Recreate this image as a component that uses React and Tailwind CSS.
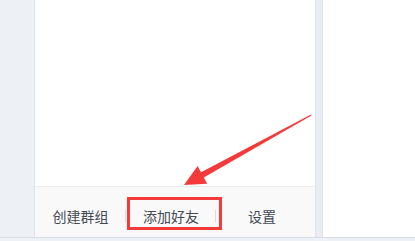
export default function App() {
  const font = { fontFamily: '"Noto Sans CJK SC", "Microsoft YaHei", sans-serif' };
  return (
    <div className="relative w-[415px] h-[241px] overflow-hidden bg-[#eef1f5] flex flex-col" style={font}>
      <div className="flex h-[238px] border-b border-[#d6dde7]">
        {/* side rail */}
        <div className="w-[35px] bg-[#edf0f5] border-r border-[#dbe2ea]" />
        {/* list panel */}
        <div className="w-[280px] flex flex-col bg-white">
          <div className="flex-1" />
          <div className="h-[51px] bg-[#f9f9f9] border-t border-[#ececec] flex items-center pt-[8px] text-[14px] text-[#434a53]">
            <div className="w-[91px] flex justify-center items-center relative">
              <span>创建群组</span>
              <span className="absolute right-0 top-1/2 -translate-y-1/2 w-px h-[13px] bg-[#dcdcdc]" />
            </div>
            <div className="w-[90px] flex justify-center items-center relative">
              <span>添加好友</span>
              <span className="absolute right-0 top-1/2 -translate-y-1/2 w-px h-[13px] bg-[#dcdcdc]" />
            </div>
            <div className="flex-1 pl-[32px]">
              <span>设置</span>
            </div>
          </div>
        </div>
        {/* splitter */}
        <div className="w-[8px] bg-[#e9edf3] border-x border-[#dde4ec]" />
        <div className="flex-1 bg-white" />
      </div>

      {/* annotation box */}
      <div className="absolute left-[127px] top-[197px] w-[95px] h-[33px] border-[3px] border-[#f43a3a]" />

      {/* annotation arrow */}
      <svg className="absolute inset-0" width="415" height="241" viewBox="0 0 415 241">
        <polygon
          points="184,185 197.6,166.1 201,172.3 311,114.5 311.5,115.5 203.8,177.5 207.2,183.7"
          fill="#f43a3a"
        />
      </svg>
    </div>
  );
}
